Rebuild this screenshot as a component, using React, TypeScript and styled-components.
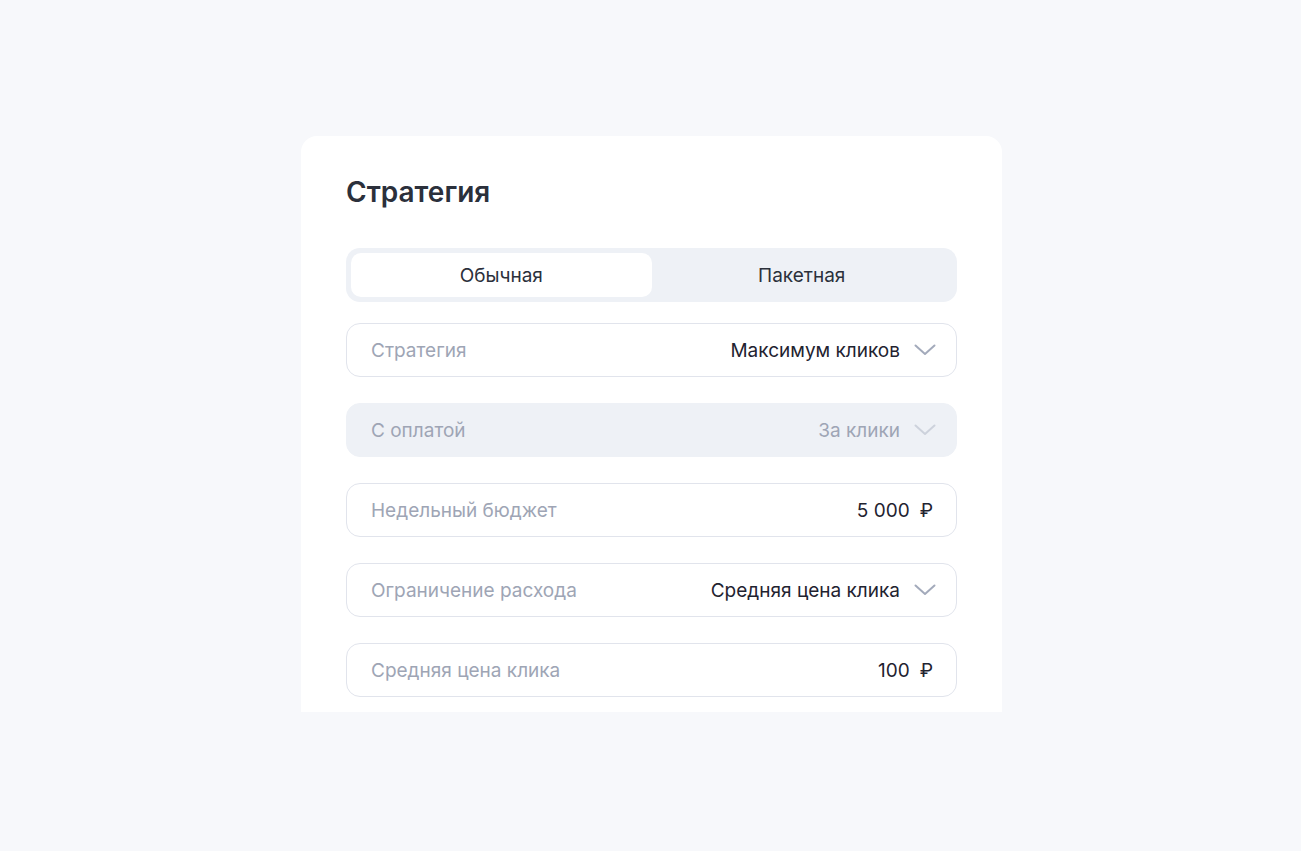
import React, { useState } from 'react';
import styled, { createGlobalStyle } from 'styled-components';

const GlobalStyle = createGlobalStyle`
    html, body {
        margin: 0;
        padding: 0;
        background: #f7f8fb;
        font-family: Inter, "Noto Sans", "Liberation Sans", sans-serif;
    }
`;

const Page = styled.div`
    min-height: 851px;
    display: flex;
    justify-content: center;
    padding: 136px 0 0 2px;
    box-sizing: border-box;
`;

const Card = styled.div`
    width: 701px;
    height: 576px;
    overflow: hidden;
    background: #ffffff;
    border-radius: 16px 16px 0 0;
    padding: 38px 45px 0;
    box-sizing: border-box;
    display: flex;
    flex-direction: column;
`;

const Title = styled.h2`
    margin: 0 0 38px;
    font-size: 28px;
    line-height: 36px;
    font-weight: 600;
    color: #2b303b;
`;

const Tabs = styled.div`
    display: flex;
    padding: 5px;
    height: 54px;
    box-sizing: border-box;
    background: #eef1f6;
    border-radius: 14px;
    margin-bottom: 21px;
`;

const Tab = styled.button<{ $active?: boolean }>`
    flex: 1;
    border: none;
    border-radius: 10px;
    background: ${(p) => (p.$active ? '#ffffff' : 'transparent')};
    font-family: inherit;
    font-size: 19px;
    color: #2b303b;
    cursor: pointer;
`;

const Fields = styled.div`
    display: flex;
    flex-direction: column;
    gap: 26px;
`;

const Field = styled.div<{ $disabled?: boolean }>`
    height: 54px;
    box-sizing: border-box;
    display: flex;
    align-items: center;
    padding: 0 20px 0 24px;
    border-radius: 14px;
    border: 1px solid ${(p) => (p.$disabled ? '#eef1f6' : '#e1e4ec')};
    background: ${(p) => (p.$disabled ? '#eef1f6' : '#ffffff')};
    font-size: 19px;
`;

const Label = styled.span`
    flex: 1;
    color: #9ea5b5;
`;

const Value = styled.span<{ $disabled?: boolean }>`
    color: ${(p) => (p.$disabled ? '#9ea5b5' : '#1f2330')};
`;

const Currency = styled.span`
    margin-left: 10px;
    margin-right: 3px;
    color: #1f2330;
`;

const Chevron = styled.svg`
    margin-left: 14px;
    flex-shrink: 0;
`;

const ChevronIcon = ({ disabled }: { disabled?: boolean }) => (
    <Chevron width="22" height="12" viewBox="0 0 22 12" fill="none">
        <path
            d="M1.5 1.5L11 10L20.5 1.5"
            stroke={disabled ? '#cdd2dc' : '#a3aabb'}
            strokeWidth="2"
            strokeLinecap="round"
            strokeLinejoin="round"
        />
    </Chevron>
);

export default function App() {
    const [tab, setTab] = useState(0);

    return (
        <>
            <GlobalStyle />
            <Page>
                <Card>
                    <Title>Стратегия</Title>
                    <Tabs>
                        <Tab $active={tab === 0} onClick={() => setTab(0)}>
                            Обычная
                        </Tab>
                        <Tab $active={tab === 1} onClick={() => setTab(1)}>
                            Пакетная
                        </Tab>
                    </Tabs>
                    <Fields>
                        <Field>
                            <Label>Стратегия</Label>
                            <Value>Максимум кликов</Value>
                            <ChevronIcon />
                        </Field>
                        <Field $disabled>
                            <Label>С оплатой</Label>
                            <Value $disabled>За клики</Value>
                            <ChevronIcon disabled />
                        </Field>
                        <Field>
                            <Label>Недельный бюджет</Label>
                            <Value>5 000</Value>
                            <Currency>₽</Currency>
                        </Field>
                        <Field>
                            <Label>Ограничение расхода</Label>
                            <Value>Средняя цена клика</Value>
                            <ChevronIcon />
                        </Field>
                        <Field>
                            <Label>Средняя цена клика</Label>
                            <Value>100</Value>
                            <Currency>₽</Currency>
                        </Field>
                    </Fields>
                </Card>
            </Page>
        </>
    );
}
